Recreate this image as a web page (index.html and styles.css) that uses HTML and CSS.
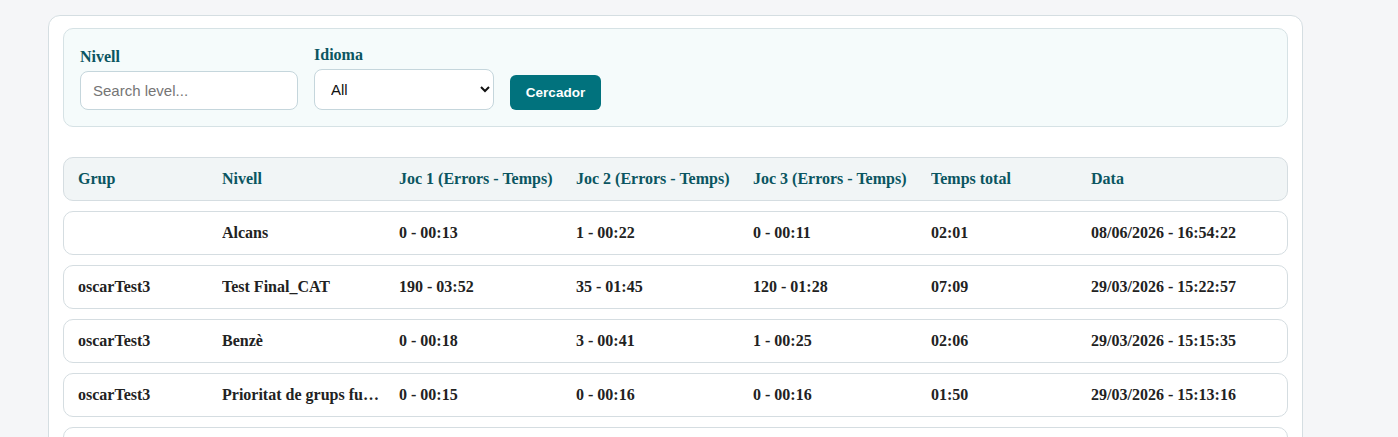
FILE: index.html
```html
<!DOCTYPE html>
<html lang="ca">
<head>
<meta charset="utf-8">
<title>Resultats</title>
<link rel="stylesheet" href="styles.css">
</head>
<body>
<div class="page">
  <div class="card">
    <form class="filters">
      <div class="field">
        <label class="label" for="lvl">Nivell</label>
        <input id="lvl" class="input" type="text" placeholder="Search level...">
      </div>
      <div class="field">
        <label class="label" for="lang">Idioma</label>
        <select id="lang" class="select"><option>All</option></select>
      </div>
      <button type="button" class="btn">Cercador</button>
    </form>

    <div class="table">
      <div class="row head">
        <div>Grup</div><div>Nivell</div><div>Joc 1 (Errors - Temps)</div><div>Joc 2 (Errors - Temps)</div><div>Joc 3 (Errors - Temps)</div><div>Temps total</div><div>Data</div>
      </div>
      <div class="row">
        <div></div><div class="trunc">Alcans</div><div>0 - 00:13</div><div>1 - 00:22</div><div>0 - 00:11</div><div>02:01</div><div>08/06/2026 - 16:54:22</div>
      </div>
      <div class="row">
        <div>oscarTest3</div><div class="trunc">Test Final_CAT</div><div>190 - 03:52</div><div>35 - 01:45</div><div>120 - 01:28</div><div>07:09</div><div>29/03/2026 - 15:22:57</div>
      </div>
      <div class="row">
        <div>oscarTest3</div><div class="trunc">Benzè</div><div>0 - 00:18</div><div>3 - 00:41</div><div>1 - 00:25</div><div>02:06</div><div>29/03/2026 - 15:15:35</div>
      </div>
      <div class="row">
        <div>oscarTest3</div><div class="trunc">Prioritat de grups funcionals</div><div>0 - 00:15</div><div>0 - 00:16</div><div>0 - 00:16</div><div>01:50</div><div>29/03/2026 - 15:13:16</div>
      </div>
      <div class="row">
        <div>oscarTest3</div><div class="trunc">Alcans</div><div>0 - 00:10</div><div>0 - 00:12</div><div>0 - 00:14</div><div>01:20</div><div>29/03/2026 - 15:10:02</div>
      </div>
    </div>
  </div>
</div>
</body>
</html>
```

FILE: styles.css
```css
* { box-sizing: border-box; }
html, body { margin: 0; padding: 0; }
body {
  background: #f5f6f8;
  font-family: "Liberation Serif", "Times New Roman", serif;
  color: #222;
  overflow: hidden;
}
.page {
  padding: 15px 95px 0 48px;
}
.card {
  background: #fff;
  border: 1px solid #d5dee2;
  border-radius: 12px;
  padding: 12px 14px 20px;
  width: 1255px;
}
.filters {
  display: flex;
  align-items: flex-end;
  gap: 16px;
  background: #f5fbfb;
  border: 1px solid #d6e2e5;
  border-radius: 10px;
  padding: 16px;
  height: 99px;
  margin: 0;
}
.field {
  display: flex;
  flex-direction: column;
}
.label {
  font-weight: bold;
  font-size: 16px;
  color: #0b5561;
  margin-bottom: 5px;
}
.input {
  width: 218px;
  height: 39px;
  border: 1px solid #c5d6dc;
  border-radius: 8px;
  background: #fff;
  padding: 0 12px;
  font-family: "Liberation Sans", Arial, sans-serif;
  font-size: 15px;
  color: #333;
  outline: none;
}
.input::placeholder { color: #757575; }
.select {
  width: 180px;
  height: 41px;
  border: 1px solid #c5d6dc;
  border-radius: 8px;
  background: #fff;
  padding: 0 12px;
  font-family: "Liberation Sans", Arial, sans-serif;
  font-size: 15px;
  color: #111;
  outline: none;
}
.btn {
  height: 35px;
  width: 91px;
  border: 0;
  border-radius: 6px;
  background: #01727d;
  color: #fff;
  font-family: "Liberation Sans", Arial, sans-serif;
  font-weight: bold;
  font-size: 13.5px;
  padding: 0;
}
.table {
  margin-top: 30px;
  display: flex;
  flex-direction: column;
  gap: 10px;
}
.row {
  display: grid;
  grid-template-columns: 144px 177px 177px 177px 178px 160px 1fr;
  align-items: center;
  height: 44px;
  padding: 0 14px;
  border: 1px solid #d5dde1;
  border-radius: 10px;
  background: #fff;
  font-weight: bold;
  font-size: 16px;
  color: #222;
}
.row > div {
  white-space: nowrap;
  overflow: hidden;
  padding-right: 8px;
}
.row .trunc { text-overflow: ellipsis; padding-right: 18px; }
.row.head {
  background: #f1f5f6;
  color: #0b5561;
}
```
